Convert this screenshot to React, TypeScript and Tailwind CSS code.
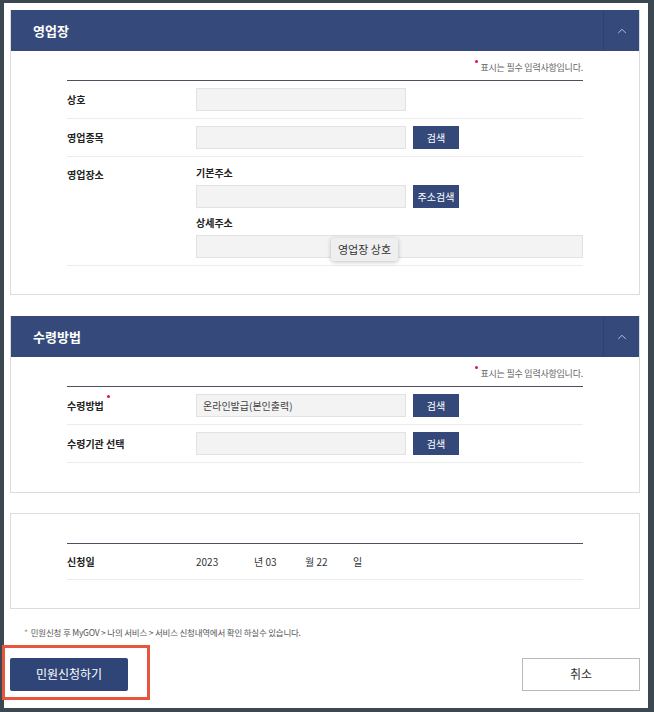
import { ChevronUp } from 'lucide-react';

const font = { fontFamily: '"Noto Sans CJK KR", "Noto Sans", sans-serif' };

function PanelHeader({ title }: { title: string }) {
  return (
    <div className="h-[41px] bg-[#354a7a] flex items-center justify-between">
      <h2 className="pl-[22px] text-[13px] font-bold text-white">{title}</h2>
      <div className="flex h-full items-center">
        <div className="w-px h-full bg-[#2e4271]" />
        <div className="w-[35px] flex items-center justify-center text-[#c9d2e6]">
          <ChevronUp size={14} strokeWidth={1.5} />
        </div>
      </div>
    </div>
  );
}

function RequiredNote({ top }: { top: string }) {
  return (
    <div className={`flex justify-end ${top} mb-[5px]`}>
      <span className="relative text-[9px] leading-[14px] text-[#666] tracking-tight">
        <span className="absolute -left-[5px] -top-[1px] w-[3px] h-[3px] rounded-full bg-[#e0143c]" />
        표시는 필수 입력사항입니다.
      </span>
    </div>
  );
}

function Field({ value, wide }: { value?: string; wide?: boolean }) {
  return (
    <div
      className={`h-[23px] ${wide ? 'flex-1' : 'w-[210px]'} bg-[#f3f3f3] border border-[#e2e2e2] flex items-center px-[6px] text-[10px] text-[#444]`}
    >
      {value}
    </div>
  );
}

function SearchBtn({ label }: { label: string }) {
  return (
    <button className="ml-[7px] h-[23px] w-[46px] bg-[#34497a] text-white text-[10px] flex items-center justify-center">
      {label}
    </button>
  );
}

function Row({ label, children, required }: { label: string; children: React.ReactNode; required?: boolean }) {
  return (
    <div className="flex items-center py-[7px] border-b border-[#ececec]">
      <div className="w-[129px] text-[10px] font-bold text-[#222]">
        <span className="relative">
          {label}
          {required && <span className="absolute -right-[6px] -top-[3px] w-[3px] h-[3px] rounded-full bg-[#e0143c]" />}
        </span>
      </div>
      <div className="flex items-center flex-1">{children}</div>
    </div>
  );
}

export default function App() {
  return (
    <div className="w-[654px] h-[712px] bg-[#3b4751] pt-[3px] pl-[4px] pr-[6px] pb-[4px]" style={font}>
      <div className="bg-white h-full pl-[6px] pr-[8px] pt-[7px]">
        {/* 영업장 */}
        <section className="border border-[#dcdcdc] border-t-0">
          <PanelHeader title="영업장" />
          <div className="px-[56px] pb-[28px]">
            <RequiredNote top="pt-[10px]" />
            <div className="border-t-[1.5px] border-[#4d505e]">
              <Row label="상호">
                <Field />
              </Row>
              <Row label="영업종목">
                <Field />
                <SearchBtn label="검색" />
              </Row>
              <div className="flex pt-[9px] pb-[7px] border-b border-[#ececec]">
                <div className="w-[129px] text-[10px] font-bold text-[#222] leading-[14px] pt-[2px]">영업장소</div>
                <div className="flex-1">
                  <div className="text-[10px] font-bold text-[#222] leading-[14px] mb-[5px]">기본주소</div>
                  <div className="flex items-center">
                    <Field />
                    <SearchBtn label="주소검색" />
                  </div>
                  <div className="text-[10px] font-bold text-[#222] leading-[14px] mt-[8px] mb-[5px]">상세주소</div>
                  <div className="relative flex">
                    <Field wide />
                    <div className="absolute left-[135px] top-[3px] px-[7px] h-[23px] flex items-center bg-[#efefef] rounded-[3px] shadow-[0_1px_4px_rgba(0,0,0,0.25)] text-[11px] text-[#333]">
                      영업장 상호
                    </div>
                  </div>
                </div>
              </div>
            </div>
          </div>
        </section>

        {/* 수령방법 */}
        <section className="mt-[21px] border border-[#dcdcdc] border-t-0">
          <PanelHeader title="수령방법" />
          <div className="px-[56px] pb-[29px]">
            <RequiredNote top="pt-[10px]" />
            <div className="border-t-[1.5px] border-[#4d505e]">
              <Row label="수령방법" required>
                <Field value="온라인발급(본인출력)" />
                <SearchBtn label="검색" />
              </Row>
              <Row label="수령기관 선택">
                <Field />
                <SearchBtn label="검색" />
              </Row>
            </div>
          </div>
        </section>

        {/* 신청일 */}
        <section className="mt-[20px] border border-[#dcdcdc] px-[56px] pt-[29px] pb-[28px]">
          <div className="border-t-[1.5px] border-[#4d505e]">
            <div className="flex items-center h-[36px] border-b border-[#ececec] text-[10px] text-[#333]">
              <div className="w-[129px] font-bold text-[#222]">신청일</div>
              <span className="w-[58px]">2023</span>
              <span className="w-[51px]">년 03</span>
              <span className="w-[48px]">월 22</span>
              <span>일</span>
            </div>
          </div>
        </section>

        <p className="mt-[17px] pl-[14px] text-[8.5px] text-[#555] tracking-tight">
          <span className="text-[#999] mr-[3px]">*</span>
          민원신청 후 MyGOV &gt; 나의 서비스 &gt; 서비스 신청내역에서 확인 하실수 있습니다.
        </p>

        <div className="mt-[19px] flex justify-between items-center">
          <div className="relative">
            <button className="w-[118px] h-[33px] bg-[#2f4577] text-white text-[12px] rounded-[2px]">민원신청하기</button>
            <div className="absolute -left-[8px] -top-[13px] w-[148px] h-[55px] border-[3px] border-[#e8553e]" />
          </div>
          <button className="w-[118px] h-[33px] bg-white border border-[#b9b9b9] text-[12px] text-[#333]">취소</button>
        </div>
      </div>
    </div>
  );
}
